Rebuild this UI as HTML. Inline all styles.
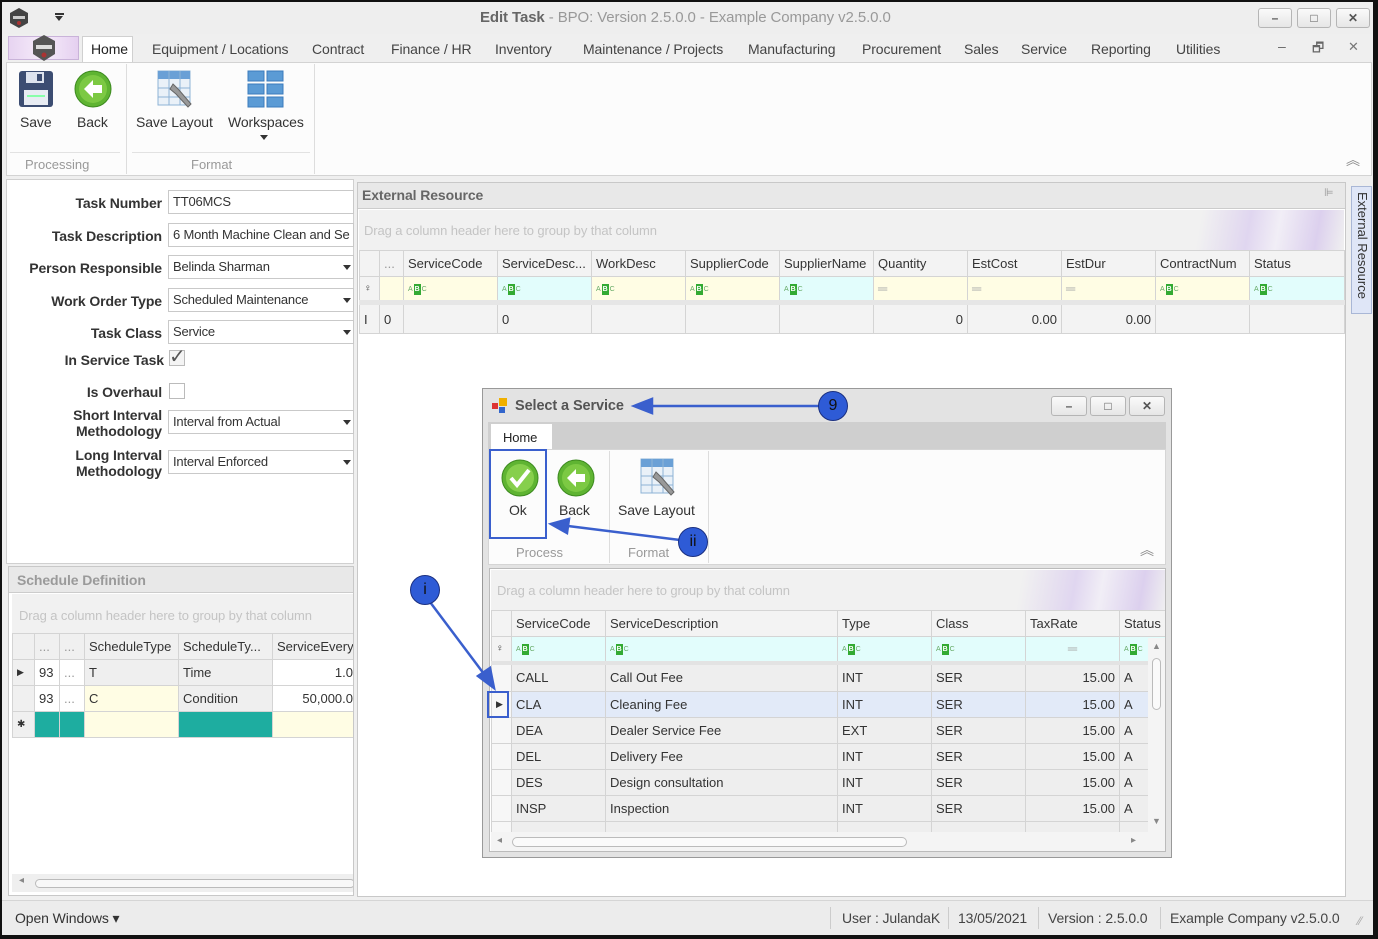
<!DOCTYPE html>
<html><head><meta charset="utf-8">
<style>
*{box-sizing:border-box;margin:0;padding:0}
body{width:1378px;height:939px;overflow:hidden;background:#111;font-family:"Liberation Sans",sans-serif;font-size:13px;color:#333;position:relative}
.a{position:absolute}
#win{position:absolute;left:2px;top:2px;width:1371px;height:933px;background:#efefef;overflow:hidden}
.t{position:absolute;white-space:nowrap;letter-spacing:-0.1px}
.lbl{position:absolute;right:1211px;font-weight:bold;color:#333;text-align:right;white-space:nowrap;letter-spacing:-0.1px;font-size:14px;line-height:16px}
.inp{position:absolute;left:166px;width:186px;height:24px;background:#fff;border:1px solid #c9c9c9;padding:3px 4px;white-space:nowrap;overflow:hidden;letter-spacing:-0.2px}
.dd::after{content:"";position:absolute;right:2px;top:9px;border-left:4px solid transparent;border-right:4px solid transparent;border-top:5px solid #333}
.wb{position:absolute;width:34px;height:20px;border:1px solid #b5b5b5;border-radius:3px;background:linear-gradient(#fafafa,#e6e6e6);text-align:center;font-size:12px;color:#555;line-height:18px;font-weight:bold}
table{border-collapse:collapse;table-layout:fixed;position:absolute}
td{border:1px solid #d4d4d4;height:26px;padding:0 4px;white-space:nowrap;overflow:hidden;letter-spacing:0}
.abc{display:inline-block;font-size:7px;color:#6a6;vertical-align:middle;letter-spacing:0}
.abc b{display:inline-block;background:#3a3;color:#fff;width:7px;height:11px;line-height:11px;text-align:center;margin:0 1px}
.y{background:#fffde4}.c{background:#e2fdfc}
.circ{position:absolute;width:30px;height:30px;border-radius:50%;background:#2e5bd6;border:1.5px solid #1a2f80;color:#111;text-align:center;line-height:27px;font-size:16px}
.grp{position:absolute;color:#999;font-size:13px}
</style></head><body>
<div id="win">
<div class="a" style="left:0;top:0;width:1371px;height:32px;background:#eeeeee"></div>
<svg class="a" style="left:6px;top:5px" width="22" height="22"><polygon points="11,1 20,6 20,16 11,21 2,16 2,6" fill="#444"/><rect x="5" y="9" width="12" height="3" fill="#ccc"/><circle cx="11" cy="16" r="2" fill="#a33"/></svg>
<div class="a" style="left:53px;top:11px;width:9px;height:2px;background:#333"></div>
<div class="a" style="left:53px;top:14px;border-left:4.5px solid transparent;border-right:4.5px solid transparent;border-top:5px solid #333"></div>
<div class="t" style="left:478px;top:7px;color:#999;font-size:15px"><span style="color:#666;font-weight:bold">Edit Task</span> - BPO: Version 2.5.0.0 - Example Company v2.5.0.0</div>
<div class="wb" style="left:1256px;top:6px">–</div>
<div class="wb" style="left:1295px;top:6px">□</div>
<div class="wb" style="left:1334px;top:6px">✕</div>
<div class="a" style="left:6px;top:34px;width:71px;height:24px;border:1px solid #c9b3d9;background:linear-gradient(90deg,#e7d4f1,#f6ecfa,#e5d0f0)"></div>
<svg class="a" style="left:29px;top:32px" width="26" height="28"><polygon points="13,1 24,7 24,20 13,27 2,20 2,7" fill="#555"/><rect x="5" y="11" width="16" height="4" fill="#ddd"/><circle cx="13" cy="21" r="2.5" fill="#a33"/></svg>
<div class="a" style="left:80px;top:34px;width:51px;height:28px;background:#fff;border:1px solid #d0d0d0;border-bottom:none"></div>
<div class="t" style="left:89px;top:39px;color:#222;font-size:14px">Home</div>
<div class="t" style="left:150px;top:39px;color:#444;font-size:14px">Equipment / Locations</div>
<div class="t" style="left:310px;top:39px;color:#444;font-size:14px">Contract</div>
<div class="t" style="left:389px;top:39px;color:#444;font-size:14px">Finance / HR</div>
<div class="t" style="left:493px;top:39px;color:#444;font-size:14px">Inventory</div>
<div class="t" style="left:581px;top:39px;color:#444;font-size:14px">Maintenance / Projects</div>
<div class="t" style="left:746px;top:39px;color:#444;font-size:14px">Manufacturing</div>
<div class="t" style="left:860px;top:39px;color:#444;font-size:14px">Procurement</div>
<div class="t" style="left:962px;top:39px;color:#444;font-size:14px">Sales</div>
<div class="t" style="left:1019px;top:39px;color:#444;font-size:14px">Service</div>
<div class="t" style="left:1089px;top:39px;color:#444;font-size:14px">Reporting</div>
<div class="t" style="left:1174px;top:39px;color:#444;font-size:14px">Utilities</div>
<div class="t" style="left:1276px;top:36px;color:#666;font-size:14px">–</div>
<div class="t" style="left:1310px;top:37px;color:#666;font-size:13px">🗗</div>
<div class="t" style="left:1346px;top:37px;color:#777;font-size:13px">✕</div>
<div class="a" style="left:4px;top:60px;width:1366px;height:114px;background:#fcfcfc;border:1px solid #d3d3d3"></div>
<div class="a" style="left:124px;top:62px;width:1px;height:110px;background:#ddd"></div>
<div class="a" style="left:312px;top:62px;width:1px;height:110px;background:#ddd"></div>
<div class="a" style="left:8px;top:150px;width:110px;height:1px;background:#e2e2e2"></div>
<div class="a" style="left:130px;top:150px;width:178px;height:1px;background:#e2e2e2"></div>
<svg class="a" style="left:16px;top:68px" width="36" height="38"><rect x="1" y="1" width="34" height="36" rx="3" fill="#3c4d72"/><rect x="8" y="2" width="18" height="11" fill="#dde3ee"/><rect x="19" y="4" width="5" height="7" fill="#3c4d72"/><rect x="6" y="20" width="24" height="15" fill="#e8ecf3"/><rect x="9" y="25" width="18" height="2" fill="#8fa"/></svg>
<div class="t" style="left:18px;top:112px;color:#333;font-size:14px">Save</div>
<svg class="a" style="left:72px;top:68px" width="38" height="38"><circle cx="19" cy="19" r="18" fill="#5fb432" stroke="#3c8a1f"/><circle cx="19" cy="19" r="14" fill="#7cc943"/><path d="M10 19 L19 10 L19 15 L28 15 L28 23 L19 23 L19 28 Z" fill="#fff"/></svg>
<div class="t" style="left:75px;top:112px;color:#333;font-size:14px">Back</div>
<svg class="a" style="left:155px;top:68px" width="38" height="38"><rect x="1" y="1" width="32" height="34" fill="#eaf1f8" stroke="#8eb3d6"/><rect x="1" y="1" width="32" height="8" fill="#6aa0d6"/><line x1="12" y1="1" x2="12" y2="35" stroke="#8eb3d6"/><line x1="23" y1="1" x2="23" y2="35" stroke="#8eb3d6"/><line x1="1" y1="18" x2="33" y2="18" stroke="#8eb3d6"/><line x1="1" y1="27" x2="33" y2="27" stroke="#8eb3d6"/><path d="M16 14 L22 20 L34 34 L31 37 L19 24 L13 19 Z" fill="#999" stroke="#666"/></svg>
<div class="t" style="left:134px;top:112px;color:#333;font-size:14px">Save Layout</div>
<svg class="a" style="left:245px;top:68px" width="38" height="38"><g fill="#5b9bd5" stroke="#3b7bbd"><rect x="1" y="1" width="16" height="10"/><rect x="20" y="1" width="16" height="10"/><rect x="1" y="14" width="16" height="10"/><rect x="20" y="14" width="16" height="10"/><rect x="1" y="27" width="16" height="10"/><rect x="20" y="27" width="16" height="10"/></g></svg>
<div class="t" style="left:226px;top:112px;color:#333;font-size:14px">Workspaces</div>
<div class="a" style="left:258px;top:133px;border-left:4px solid transparent;border-right:4px solid transparent;border-top:5px solid #333"></div>
<div class="grp" style="left:23px;top:155px">Processing</div>
<div class="grp" style="left:189px;top:155px">Format</div>
<div class="t" style="left:1344px;top:148px;color:#888;font-size:14px">︽</div>
<div class="a" style="left:4px;top:177px;width:348px;height:385px;background:#fff;border:1px solid #d0d0d0"></div>
<div class="lbl" style="top:193px">Task Number</div><div class="inp" style="top:188px">TT06MCS</div>
<div class="lbl" style="top:226px">Task Description</div><div class="inp" style="top:221px">6 Month Machine Clean and Se</div>
<div class="lbl" style="top:258px">Person Responsible</div><div class="inp dd" style="top:253px">Belinda Sharman</div>
<div class="lbl" style="top:291px">Work Order Type</div><div class="inp dd" style="top:286px">Scheduled Maintenance</div>
<div class="lbl" style="top:323px">Task Class</div><div class="inp dd" style="top:318px">Service</div>
<div class="lbl" style="top:350px;right:1209px">In Service Task</div>
<div class="a" style="left:167px;top:348px;width:16px;height:16px;border:1px solid #bbb;background:#f4f4f4"></div>
<div class="t" style="left:167px;top:342px;font-size:20px;color:#555">✓</div>
<div class="lbl" style="top:382px">Is Overhaul</div>
<div class="a" style="left:167px;top:381px;width:16px;height:16px;border:1px solid #bbb;background:#fff"></div>
<div class="lbl" style="top:405px">Short Interval<br>Methodology</div><div class="inp dd" style="top:408px">Interval from Actual</div>
<div class="lbl" style="top:445px">Long Interval<br>Methodology</div><div class="inp dd" style="top:448px">Interval Enforced</div>
<div class="a" style="left:6px;top:564px;width:346px;height:330px;background:#fff;border:1px solid #c8c8c8;overflow:hidden">
<div class="a" style="left:0;top:0;width:344px;height:26px;background:#e8e8e8;border-bottom:1px solid #ccc"></div>
<div class="t" style="left:8px;top:5px;color:#9a9a9a;font-weight:bold;font-size:14px">Schedule Definition</div>
<div class="a" style="left:3px;top:27px;width:342px;height:40px;background:#f1f1f1"></div>
<div class="t" style="left:10px;top:41px;color:#c4c4c4">Drag a column header here to group by that column</div>
<table style="left:3px;top:66px;width:345px">
<col style="width:22px"><col style="width:25px"><col style="width:25px"><col style="width:94px"><col style="width:94px"><col style="width:85px">
<tr style="background:#f0f0f0"><td></td><td style="color:#999">...</td><td style="color:#999">...</td><td>ScheduleType</td><td>ScheduleTy...</td><td>ServiceEvery</td></tr>
<tr><td style="background:#f0f0f0;font-size:9px">▶</td><td>93</td><td style="color:#999">...</td><td style="background:#efefef">T</td><td style="background:#efefef">Time</td><td style="text-align:right;background:#fff">1.0</td></tr>
<tr><td style="background:#f0f0f0"></td><td>93</td><td style="color:#999">...</td><td class="y">C</td><td style="background:#efefef">Condition</td><td style="text-align:right">50,000.0</td></tr>
<tr><td style="background:#f0f0f0;font-size:10px">✱</td><td style="background:#1eada0"></td><td style="background:#1eada0"></td><td class="y"></td><td style="background:#1eada0"></td><td class="y"></td></tr>
</table>
<div class="a" style="left:3px;top:307px;width:342px;height:18px;background:#efefef"></div>
<div class="a" style="left:26px;top:312px;width:320px;height:9px;border:1px solid #bbb;border-radius:5px;background:#f8f8f8"></div>
<div class="t" style="left:10px;top:308px;color:#888;font-size:10px">◂</div>
</div>
<div class="a" style="left:355px;top:180px;width:989px;height:715px;background:#fff;border:1px solid #c8c8c8"></div>
<div class="a" style="left:356px;top:181px;width:987px;height:26px;background:#e8e8e8;border-bottom:1px solid #ccc"></div>
<div class="t" style="left:360px;top:185px;color:#666;font-weight:bold;font-size:14px">External Resource</div>
<div class="t" style="left:1322px;top:184px;color:#999;font-size:11px">⊫</div>
<div class="a" style="left:357px;top:208px;width:985px;height:41px;background:linear-gradient(100deg,#f1f1f1 0%,#f1f1f1 85%,#e0d6f0 90%,#f1eef6 93%,#dcd0ee 97%,#f0f0f0 100%)"></div>
<div class="t" style="left:362px;top:221px;color:#c4c4c4">Drag a column header here to group by that column</div>
<table style="left:357px;top:248px;width:985px">
<col style="width:20px"><col style="width:24px"><col style="width:94px"><col style="width:94px"><col style="width:94px"><col style="width:94px"><col style="width:94px"><col style="width:94px"><col style="width:94px"><col style="width:94px"><col style="width:94px"><col style="width:95px">
<tr style="background:#f3f3f3"><td></td><td style="color:#999">...</td><td>ServiceCode</td><td>ServiceDesc...</td><td>WorkDesc</td><td>SupplierCode</td><td>SupplierName</td><td>Quantity</td><td>EstCost</td><td>EstDur</td><td>ContractNum</td><td>Status</td></tr>
<tr><td style="background:#f3f3f3;font-size:10px">♀</td><td class="y"></td><td class="y"><span class="abc">A<b>B</b>C</span></td><td class="c"><span class="abc">A<b>B</b>C</span></td><td class="y"><span class="abc">A<b>B</b>C</span></td><td class="y"><span class="abc">A<b>B</b>C</span></td><td class="c"><span class="abc">A<b>B</b>C</span></td><td class="y" style="color:#aaa">═</td><td class="y" style="color:#aaa">═</td><td class="y" style="color:#aaa">═</td><td class="y"><span class="abc">A<b>B</b>C</span></td><td class="c"><span class="abc">A<b>B</b>C</span></td></tr>
<tr style="background:#f3f3f3"><td style="border-top:5px solid #e6e6e6;height:31px">I</td><td style="border-top:5px solid #e6e6e6">0</td><td style="border-top:5px solid #e6e6e6"></td><td style="border-top:5px solid #e6e6e6">0</td><td style="border-top:5px solid #e6e6e6"></td><td style="border-top:5px solid #e6e6e6"></td><td style="border-top:5px solid #e6e6e6"></td><td style="border-top:5px solid #e6e6e6;text-align:right">0</td><td style="border-top:5px solid #e6e6e6;text-align:right">0.00</td><td style="border-top:5px solid #e6e6e6;text-align:right">0.00</td><td style="border-top:5px solid #e6e6e6"></td><td style="border-top:5px solid #e6e6e6"></td></tr>
</table>
<div class="a" style="left:1349px;top:184px;width:21px;height:128px;background:#dfe6f7;border:1px solid #a9b7d6"></div>
<div class="t" style="left:1353px;top:190px;writing-mode:vertical-rl;color:#333;font-size:13px;letter-spacing:0">External Resource</div>
<div class="a" style="left:0;top:898px;width:1371px;height:35px;background:#ececec;border-top:1px solid #d5d5d5"></div>
<div class="t" style="left:13px;top:908px;color:#333;font-size:14px">Open Windows ▾</div>
<div class="a" style="left:828px;top:905px;width:1px;height:22px;background:#ccc"></div>
<div class="t" style="left:840px;top:908px;color:#444;font-size:14px">User : JulandaK</div>
<div class="a" style="left:946px;top:905px;width:1px;height:22px;background:#ccc"></div>
<div class="t" style="left:956px;top:908px;color:#444;font-size:14px">13/05/2021</div>
<div class="a" style="left:1036px;top:905px;width:1px;height:22px;background:#ccc"></div>
<div class="t" style="left:1046px;top:908px;color:#444;font-size:14px">Version : 2.5.0.0</div>
<div class="a" style="left:1158px;top:905px;width:1px;height:22px;background:#ccc"></div>
<div class="t" style="left:1168px;top:908px;color:#444;font-size:14px">Example Company v2.5.0.0</div>
<div class="t" style="left:1356px;top:912px;color:#aaa;font-size:12px">⁄⁄</div>

<div class="a" style="left:480px;top:386px;width:690px;height:470px;background:#e3e3e3;border:1px solid #999"></div>
<svg class="a" style="left:490px;top:395px" width="18" height="18"><rect x="0" y="6" width="6" height="6" fill="#d33"/><rect x="7" y="1" width="8" height="8" fill="#f0b000"/><rect x="7" y="10" width="6" height="6" fill="#36c"/></svg>
<div class="t" style="left:513px;top:396px;color:#555;font-weight:bold;font-size:14.5px">Select a Service</div>
<div class="wb" style="left:1049px;top:394px;width:36px">–</div>
<div class="wb" style="left:1088px;top:394px;width:36px">□</div>
<div class="wb" style="left:1127px;top:394px;width:36px">✕</div>
<div class="a" style="left:486px;top:420px;width:678px;height:27px;background:#cfcfcf"></div>
<div class="a" style="left:489px;top:422px;width:61px;height:27px;background:#fff"></div>
<div class="t" style="left:501px;top:428px;color:#222">Home</div>
<div class="a" style="left:486px;top:447px;width:678px;height:116px;background:#fcfcfc;border:1px solid #d5d5d5"></div>
<div class="a" style="left:607px;top:449px;width:1px;height:112px;background:#ddd"></div>
<div class="a" style="left:706px;top:449px;width:1px;height:112px;background:#ddd"></div>
<svg class="a" style="left:499px;top:457px" width="38" height="38"><circle cx="19" cy="19" r="18" fill="#5fb432" stroke="#3c8a1f"/><circle cx="19" cy="19" r="14" fill="#86cf4c"/><path d="M10 19 L16 26 L28 11" fill="none" stroke="#fff" stroke-width="4"/></svg>
<div class="t" style="left:507px;top:500px;color:#333;font-size:14px">Ok</div>
<svg class="a" style="left:555px;top:457px" width="38" height="38"><circle cx="19" cy="19" r="18" fill="#5fb432" stroke="#3c8a1f"/><circle cx="19" cy="19" r="14" fill="#7cc943"/><path d="M10 19 L19 10 L19 15 L28 15 L28 23 L19 23 L19 28 Z" fill="#fff"/></svg>
<div class="t" style="left:557px;top:500px;color:#333;font-size:14px">Back</div>
<svg class="a" style="left:638px;top:456px" width="38" height="38"><rect x="1" y="1" width="32" height="34" fill="#eaf1f8" stroke="#8eb3d6"/><rect x="1" y="1" width="32" height="8" fill="#6aa0d6"/><line x1="12" y1="1" x2="12" y2="35" stroke="#8eb3d6"/><line x1="23" y1="1" x2="23" y2="35" stroke="#8eb3d6"/><line x1="1" y1="18" x2="33" y2="18" stroke="#8eb3d6"/><line x1="1" y1="27" x2="33" y2="27" stroke="#8eb3d6"/><path d="M16 14 L22 20 L34 34 L31 37 L19 24 L13 19 Z" fill="#999" stroke="#666"/></svg>
<div class="t" style="left:616px;top:500px;color:#333;font-size:14px">Save Layout</div>
<div class="grp" style="left:514px;top:543px">Process</div>
<div class="grp" style="left:626px;top:543px">Format</div>
<div class="t" style="left:1138px;top:538px;color:#888;font-size:14px">︽</div>
<div class="a" style="left:487px;top:566px;width:677px;height:284px;background:#fff;border:1px solid #bbb;overflow:hidden">
<div class="a" style="left:1px;top:1px;width:675px;height:40px;background:linear-gradient(100deg,#f1f1f1 0%,#f1f1f1 78%,#e0d6f0 86%,#f1eef6 90%,#dcd0ee 96%,#f0f0f0 100%)"></div>
<div class="t" style="left:7px;top:14px;color:#c4c4c4">Drag a column header here to group by that column</div>
<table style="left:1px;top:41px;width:676px">
<col style="width:20px"><col style="width:94px"><col style="width:232px"><col style="width:94px"><col style="width:94px"><col style="width:94px"><col style="width:48px">
<tr style="background:#f3f3f3"><td></td><td>ServiceCode</td><td>ServiceDescription</td><td>Type</td><td>Class</td><td>TaxRate</td><td>Status</td></tr>
<tr class="c"><td style="background:#f3f3f3;font-size:10px">♀</td><td><span class="abc">A<b>B</b>C</span></td><td><span class="abc">A<b>B</b>C</span></td><td><span class="abc">A<b>B</b>C</span></td><td><span class="abc">A<b>B</b>C</span></td><td style="color:#aaa;text-align:center">═</td><td><span class="abc">A<b>B</b>C</span></td></tr>
<tr style="background:#eeeeee"><td style="background:#f7f7f7;border-top:4px solid #e3e3e3;height:29px"></td><td style="border-top:4px solid #e3e3e3">CALL</td><td style="border-top:4px solid #e3e3e3">Call Out Fee</td><td style="border-top:4px solid #e3e3e3">INT</td><td style="border-top:4px solid #e3e3e3">SER</td><td style="border-top:4px solid #e3e3e3;text-align:right">15.00</td><td style="border-top:4px solid #e3e3e3">A</td></tr>
<tr style="background:#e2eaf8"><td style="background:#f7f7f7;font-size:9px">▶</td><td>CLA</td><td>Cleaning Fee</td><td>INT</td><td>SER</td><td style="text-align:right">15.00</td><td>A</td></tr>
<tr style="background:#eeeeee"><td style="background:#f7f7f7"></td><td>DEA</td><td>Dealer Service Fee</td><td>EXT</td><td>SER</td><td style="text-align:right">15.00</td><td>A</td></tr>
<tr style="background:#eeeeee"><td style="background:#f7f7f7"></td><td>DEL</td><td>Delivery Fee</td><td>INT</td><td>SER</td><td style="text-align:right">15.00</td><td>A</td></tr>
<tr style="background:#eeeeee"><td style="background:#f7f7f7"></td><td>DES</td><td>Design consultation</td><td>INT</td><td>SER</td><td style="text-align:right">15.00</td><td>A</td></tr>
<tr style="background:#eeeeee"><td style="background:#f7f7f7"></td><td>INSP</td><td>Inspection</td><td>INT</td><td>SER</td><td style="text-align:right">15.00</td><td>A</td></tr>
<tr style="background:#eeeeee"><td style="background:#f7f7f7"></td><td></td><td></td><td></td><td></td><td></td><td></td></tr>
</table>
<div class="a" style="left:658px;top:69px;width:18px;height:194px;background:#f4f4f4"></div>
<div class="a" style="left:662px;top:89px;width:9px;height:52px;border:1px solid #bbb;border-radius:5px;background:#fafafa"></div>
<div class="t" style="left:662px;top:72px;color:#888;font-size:9px">▲</div>
<div class="t" style="left:662px;top:247px;color:#888;font-size:9px">▼</div>
<div class="a" style="left:1px;top:263px;width:675px;height:20px;background:#f4f4f4"></div>
<div class="a" style="left:22px;top:268px;width:395px;height:10px;border:1px solid #bbb;border-radius:5px;background:#fafafa"></div>
<div class="t" style="left:7px;top:266px;color:#888;font-size:10px">◂</div>
<div class="t" style="left:641px;top:266px;color:#888;font-size:10px">▸</div>
</div>

<div class="a" style="left:487px;top:447px;width:58px;height:90px;border:2.5px solid #3a5fcd"></div>
<div class="a" style="left:485px;top:689px;width:22px;height:27px;border:2.5px solid #3a5fcd"></div>
<svg class="a" style="left:0;top:0" width="1371" height="933">
<g stroke="#3a5fcd" stroke-width="2.5" fill="#3a5fcd">
<line x1="818" y1="404" x2="648" y2="404"/><polygon points="632,404 650,397 650,411"/>
<line x1="678" y1="538" x2="566" y2="524"/><polygon points="549,522 567,517 565,531"/>
<line x1="428" y1="600" x2="482" y2="672"/><polygon points="492,686 476,674 488,666"/>
</g></svg>
<div class="circ" style="left:816px;top:389px">9</div>
<div class="circ" style="left:676px;top:525px">ii</div>
<div class="circ" style="left:408px;top:573px">i</div>
</div>
</body></html>
